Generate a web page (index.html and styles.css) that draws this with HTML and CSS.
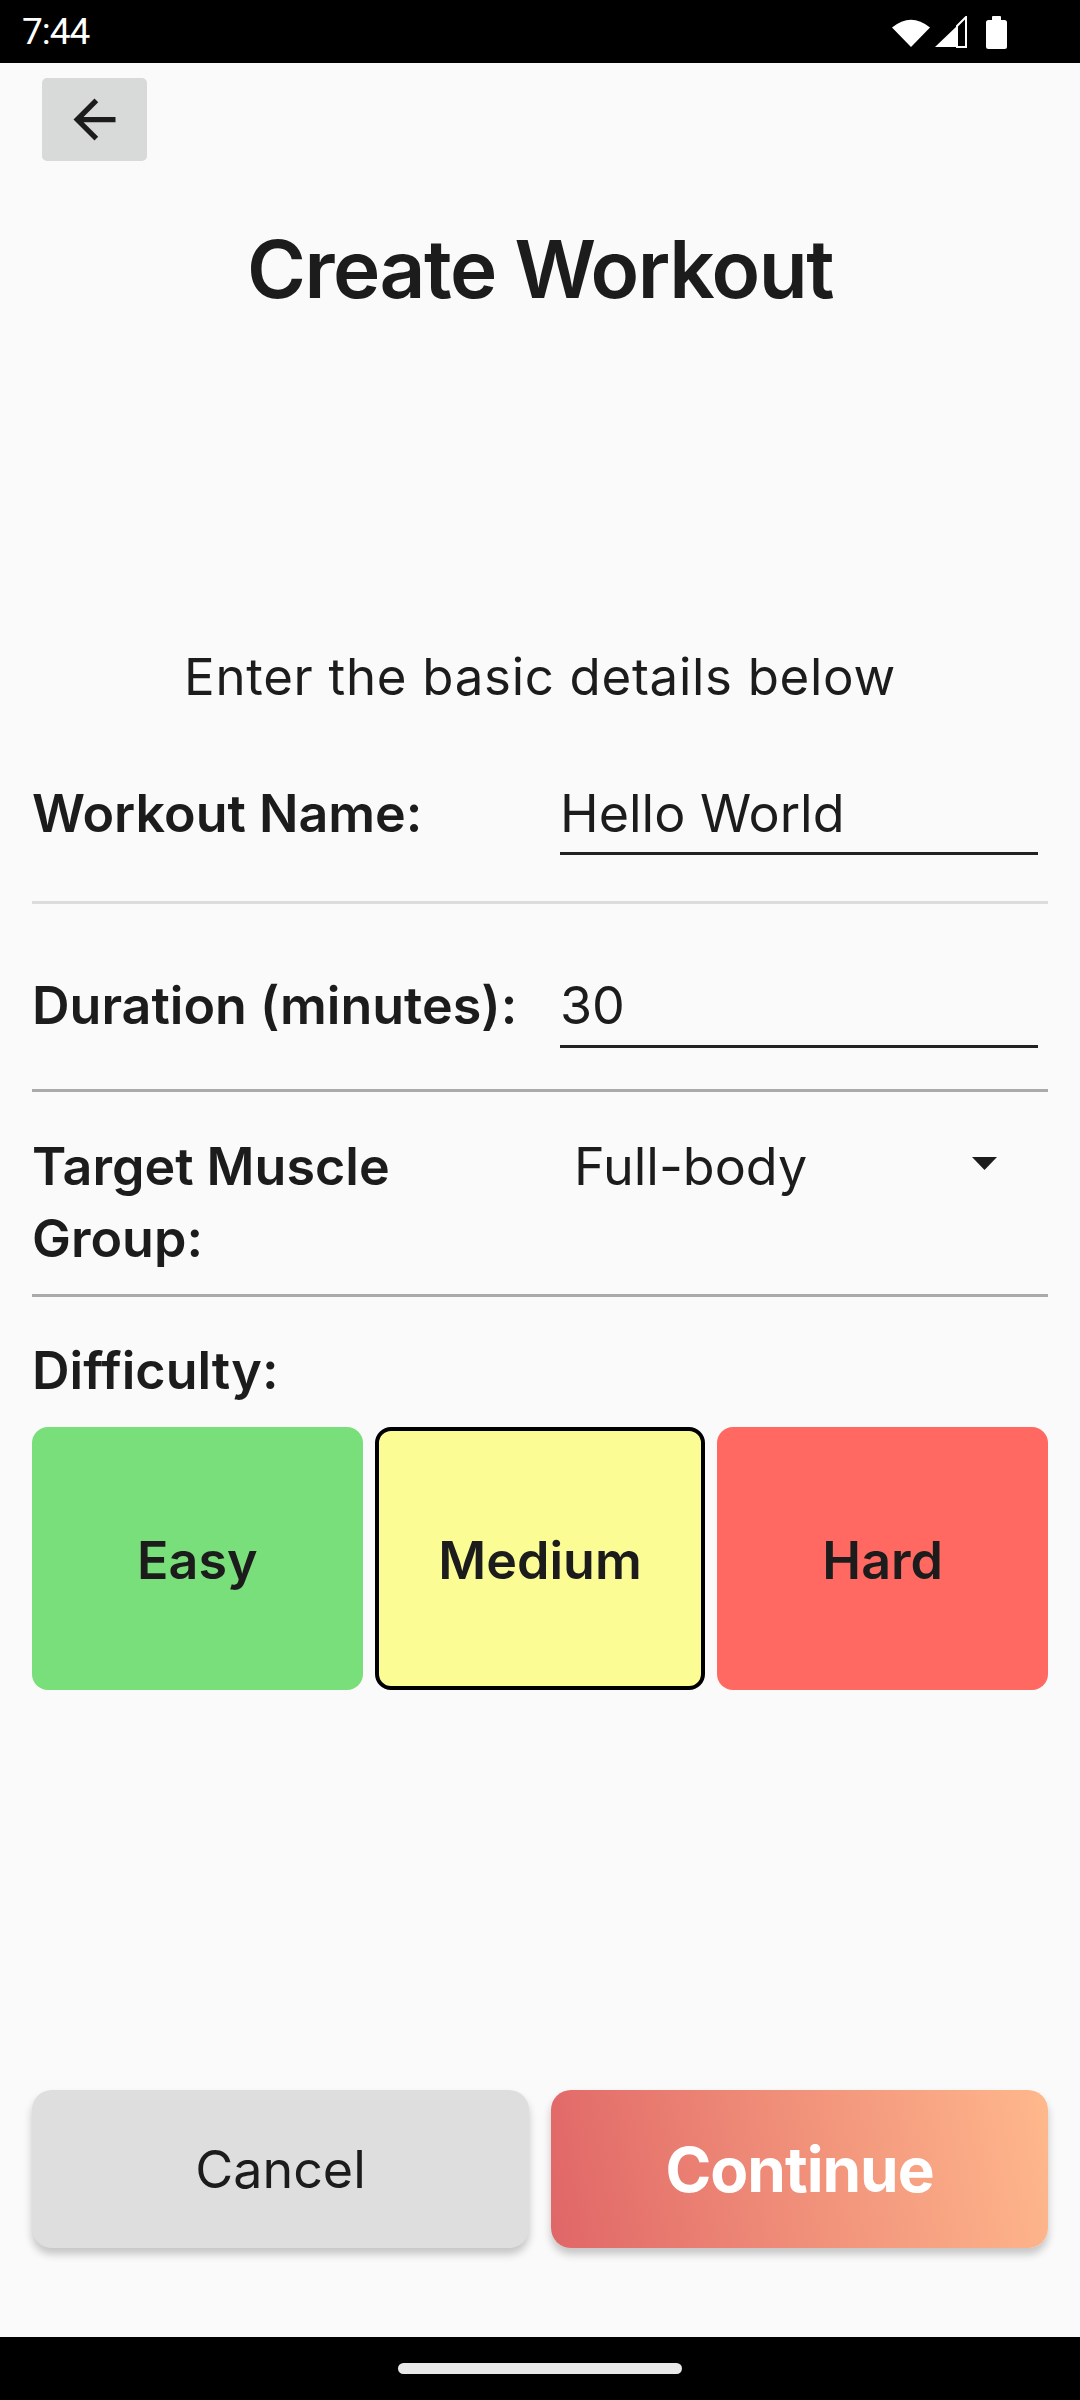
FILE: index.html
```html
<!DOCTYPE html>
<html lang="en">
<head>
<meta charset="utf-8">
<title>Create Workout</title>
<link rel="stylesheet" href="styles.css">
</head>
<body>
<div class="status">
  <span class="time">7:44</span>
  <div class="status-icons">
    <svg class="wifi" width="38" height="28" viewBox="0 0 38 28"><path d="M0 8.5 Q19 -7 38 8.5 L19 28 Z" fill="#fff"/></svg>
    <svg class="signal" width="33" height="32" viewBox="0 0 33 32"><polygon points="1,31 23,31 23,10" fill="#fff"/><polygon points="23,10 32,1 32,31 23,31" fill="none" stroke="#fff" stroke-width="2"/></svg>
    <svg class="battery" width="21" height="33" viewBox="0 0 21 33"><rect x="6" y="0" width="9" height="5" rx="1" fill="#fff"/><rect x="0" y="4" width="21" height="29" rx="2.5" fill="#fff"/></svg>
  </div>
</div>
<main class="page">
  <button class="back" aria-label="Back">
    <svg width="63" height="63" viewBox="0 0 24 24"><path d="M20 11H7.83l5.59-5.59L12 4l-8 8 8 8 1.41-1.41L7.830 13H20v-2z" fill="#1c1c1c"/></svg>
  </button>
  <h1 class="title">Create Workout</h1>
  <p class="subtitle">Enter the basic details below</p>

  <div class="row row-name">
    <div class="label">Workout Name:</div>
    <div class="field field-name">Hello World</div>
  </div>
  <div class="row row-duration">
    <div class="label">Duration (minutes):</div>
    <div class="field field-duration">30</div>
  </div>
  <div class="row row-muscle">
    <div class="label">Target Muscle Group:</div>
    <div class="spinner">
      <span>Full-body</span>
      <svg class="caret" width="25" height="13" viewBox="0 0 25 13"><polygon points="0,0 25,0 12.5,13" fill="#1c1c1c"/></svg>
    </div>
  </div>
  <div class="label difficulty-label">Difficulty:</div>
  <div class="cards">
    <div class="card easy">Easy</div>
    <div class="card medium">Medium</div>
    <div class="card hard">Hard</div>
  </div>

  <div class="actions">
    <button class="btn cancel">Cancel</button>
    <button class="btn continue">Continue</button>
  </div>
</main>
<div class="navbar"><div class="handle"></div></div>
</body>
</html>
```

FILE: styles.css
```css
* { box-sizing: border-box; }
html, body { margin: 0; padding: 0; }
body {
  width: 1080px;
  height: 2400px;
  background: #fafafa;
  display: flex;
  flex-direction: column;
  font-family: Inter, "Noto Sans", sans-serif;
  color: #1c1c1c;
  overflow: hidden;
}
.status {
  height: 63px;
  flex: none;
  background: #000;
  display: flex;
  align-items: center;
  justify-content: space-between;
  padding: 0 73px 0 22px;
}
.time {
  font-family: Roboto, sans-serif;
  color: #fff;
  font-size: 37px;
  line-height: 63px;
  letter-spacing: -1px;
}
.status-icons { display: flex; align-items: center; gap: 4px; }
.wifi { margin-top: 2px; }
.battery { margin-left: 15px; margin-top: 1px; }

.page {
  flex: 1;
  display: flex;
  flex-direction: column;
  padding: 15px 32px 0;
}
.back {
  width: 105px;
  height: 83px;
  margin-left: 10px;
  border: none;
  border-radius: 5px;
  background: #d8d9d9;
  display: flex;
  align-items: center;
  justify-content: center;
  padding: 0;
}
.title {
  margin: 58px 0 0;
  font-size: 80px;
  line-height: 100px;
  font-weight: 600;
  text-align: center;
  letter-spacing: -1.5px;
}
.subtitle {
  margin: 327px 0 0;
  font-size: 51px;
  line-height: 62px;
  text-align: center;
  font-weight: 400;
  letter-spacing: 0.7px;
}
.row {
  display: grid;
  grid-template-columns: 528px 1fr;
  align-items: start;
}
.label {
  font-size: 52px;
  line-height: 72px;
  font-weight: 600;
  letter-spacing: 0;
  padding-top: 2px;
  margin-bottom: -2px;
}
.field {
  font-size: 52px;
  line-height: 72px;
  border-bottom: 3px solid #222;
  margin-right: 10px;
  padding-top: 2px;
}
.row-name {
  padding: 68px 0 46px;
  border-bottom: 3px solid #dcdcdc;
}
.field-name { padding-bottom: 2px; }
.row-duration {
  padding: 64px 0 41px;
  border-bottom: 3px solid #aaaaaa;
}
.field-duration { padding-bottom: 3px; }
.row-muscle {
  padding: 37px 0 21px;
  border-bottom: 3px solid #aaaaaa;
}
.spinner {
  display: flex;
  align-items: flex-start;
  justify-content: space-between;
  padding: 2px 51px 0 14px;
  font-size: 52px;
  line-height: 72px;
}
.caret { margin-top: 26px; }
.difficulty-label { margin-top: 36px; }
.cards {
  margin-top: 22px;
  display: grid;
  grid-template-columns: repeat(3, 1fr);
  gap: 12px;
}
.card {
  height: 263px;
  border-radius: 16px;
  display: flex;
  align-items: center;
  justify-content: center;
  font-size: 52px;
  font-weight: 600;
  padding-top: 4px;
}
.easy { background: #79df7a; }
.medium { background: #fcfc95; border: 4px solid #000; }
.hard { background: #ff6961; }

.actions {
  margin-top: auto;
  margin-bottom: 89px;
  display: grid;
  grid-template-columns: 1fr 1fr;
  gap: 22px;
}
.btn {
  height: 158px;
  border: none;
  border-radius: 20px;
  font-family: Inter, "Noto Sans", sans-serif;
  box-shadow: 0 6px 8px rgba(0, 0, 0, 0.22);
  padding-top: 2px;
}
.cancel {
  background: #dedede;
  color: #1c1c1c;
  font-size: 52px;
  font-weight: 400;
}
.continue {
  background: linear-gradient(80deg, #e06667 0%, #ef8c78 45%, #ffb88c 100%);
  color: #fff;
  font-size: 62px;
  font-weight: 700;
  letter-spacing: -1px;
}
.navbar {
  height: 63px;
  flex: none;
  background: #000;
  display: flex;
  justify-content: center;
  padding-top: 26px;
}
.handle {
  width: 284px;
  height: 11px;
  border-radius: 6px;
  background: #e8e8e8;
}
```
